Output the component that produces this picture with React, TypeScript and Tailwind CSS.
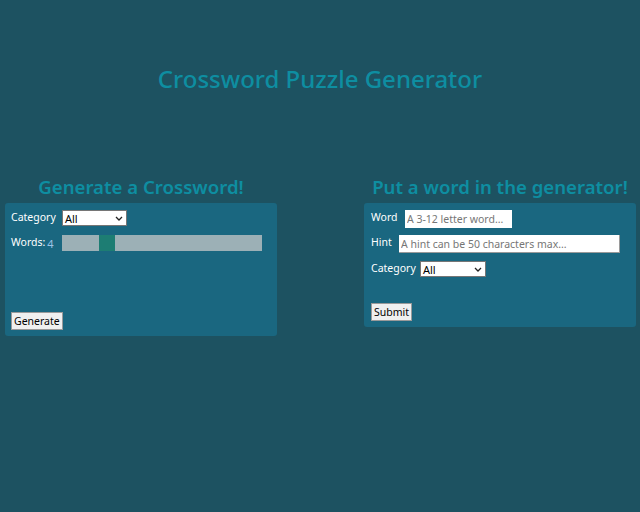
import React from "react";

const font = { fontFamily: '"Noto Sans", "Open Sans", sans-serif' };

function FakeSelect({ w }: { w: string }) {
  return (
    <div
      className={`${w} h-[16px] bg-white border border-[#767676] flex items-center justify-between pl-[2px] pr-[3px] text-black text-[11px] leading-none`}
    >
      <span>All</span>
      <svg width="8" height="5" viewBox="0 0 8 5" fill="none">
        <path d="M1 1l3 3 3-3" stroke="#222" strokeWidth="1.3" />
      </svg>
    </div>
  );
}

export default function App() {
  return (
    <div className="w-[640px] h-[512px] bg-[#1d5261] overflow-hidden" style={font}>
      <h1 className="pt-[63px] h-[175px] text-center text-[24px] leading-[32px] text-[#0e8ea1] font-medium">
        Crossword Puzzle Generator
      </h1>
      <div className="flex justify-between pl-[5px] pr-[4px]">
        <div className="w-[272px] flex flex-col">
          <h2 className="h-[28px] text-center text-[18.6px] leading-[24px] font-semibold text-[#0e8ea1]">
            Generate a Crossword!
          </h2>
          <div className="h-[133px] bg-[#1a6780] rounded-[3px] px-[6px] pt-[7px] flex flex-col text-[10.5px] text-white">
            <div className="flex items-center h-[16px]">
              <span className="w-[51px]">Category</span>
              <FakeSelect w="w-[65px]" />
            </div>
            <div className="flex items-center mt-[9px] h-[16px]">
              <div className="w-[51px] flex items-center">
                <span>Words:</span>
                <span className="ml-[2px] mt-[3px] text-[#9dc3e6] text-[11px]">4</span>
              </div>
              <div className="flex w-[200px] h-[16px]">
                <div className="w-[37px] bg-[#9cb0b6]" />
                <div className="w-[16px] bg-[#1d7d73]" />
                <div className="flex-1 bg-[#9cb0b6]" />
              </div>
            </div>
            <div className="flex-1" />
            <button className="self-start mb-[6px] h-[18px] px-[2px] bg-[#f0f0f0] border border-[#9a9a9a] text-black text-[10.5px] leading-[14px]">
              Generate
            </button>
          </div>
        </div>
        <div className="w-[272px] flex flex-col">
          <h2 className="h-[28px] text-center text-[18.6px] leading-[24px] font-semibold text-[#0e8ea1]">
            Put a word in the generator!
          </h2>
          <div className="h-[124px] bg-[#1a6780] rounded-[3px] px-[7px] pt-[7px] flex flex-col text-[10.5px] text-white">
            <div className="flex items-center h-[18px]">
              <span className="w-[34px] -mt-[2px]">Word</span>
              <input
                className="w-[107px] h-[18px] bg-white text-black text-[10.5px] px-[2px] outline-none placeholder:text-[#767676]"
                placeholder="A 3-12 letter word..."
              />
            </div>
            <div className="flex items-center h-[18px] mt-[7px]">
              <span className="w-[28px] -mt-[2px]">Hint</span>
              <input
                className="w-[221px] h-[18px] bg-white text-black text-[10.5px] px-[2px] outline-none border-b border-r border-[#9a9a9a] placeholder:text-[#767676]"
                placeholder="A hint can be 50 characters max..."
              />
            </div>
            <div className="flex items-center h-[16px] mt-[8px]">
              <span className="w-[49px]">Category</span>
              <FakeSelect w="w-[66px]" />
            </div>
            <div className="flex-1" />
            <button className="self-start mb-[6px] h-[18px] px-[2px] bg-[#f0f0f0] border border-[#9a9a9a] text-black text-[10.5px] leading-[14px]">
              Submit
            </button>
          </div>
        </div>
      </div>
    </div>
  );
}
